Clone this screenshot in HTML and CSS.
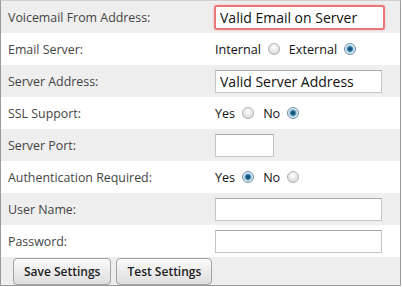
FILE: index.html
```html
<!DOCTYPE html>
<html lang="en">
<head>
    <meta charset="UTF-8">
    <title>Voicemail Settings</title>
    <link rel="stylesheet" href="styles.css">
</head>
<body>
    <form class="settings">
        <div class="row shaded">
            <label class="label">Voicemail From Address:</label>
            <div class="field">
                <input type="text" class="text-input wide invalid" value="Valid Email on Server">
            </div>
        </div>
        <div class="row">
            <label class="label">Email Server:</label>
            <div class="field choice">
                <span>Internal</span> <input type="radio" name="server" class="radio">
                <span>External</span> <input type="radio" name="server" class="radio" checked>
            </div>
        </div>
        <div class="row shaded">
            <label class="label">Server Address:</label>
            <div class="field">
                <input type="text" class="text-input long" value="Valid Server Address">
            </div>
        </div>
        <div class="row">
            <label class="label">SSL Support:</label>
            <div class="field choice">
                <span>Yes</span> <input type="radio" name="ssl" class="radio">
                <span>No</span> <input type="radio" name="ssl" class="radio" checked>
            </div>
        </div>
        <div class="row shaded">
            <label class="label">Server Port:</label>
            <div class="field">
                <input type="text" class="text-input short">
            </div>
        </div>
        <div class="row">
            <label class="label">Authentication Required:</label>
            <div class="field choice">
                <span>Yes</span> <input type="radio" name="auth" class="radio" checked>
                <span>No</span> <input type="radio" name="auth" class="radio">
            </div>
        </div>
        <div class="row shaded">
            <label class="label">User Name:</label>
            <div class="field">
                <input type="text" class="text-input long">
            </div>
        </div>
        <div class="row">
            <label class="label">Password:</label>
            <div class="field">
                <input type="password" class="text-input long">
            </div>
        </div>
        <div class="actions">
            <button type="button" class="button">Save Settings</button>
            <button type="button" class="button">Test Settings</button>
        </div>
    </form>
</body>
</html>
```

FILE: styles.css
```css
:root {
    --label-color: #444444;
    --text-color: #111111;
    --shade: #eeeeee;
    --border-color: #9a9a9a;
    --input-border: #c4c4c4;
}

body {
    margin: 0;
    font-family: 'Open Sans', sans-serif;
    font-size: 12.4px;
    color: var(--text-color);
    background: #ffffff;
}

.settings {
    width: 399px;
    border: 1px solid var(--border-color);
    border-top-color: #d0d0d0;
}

.row {
    display: grid;
    grid-template-columns: 212px 1fr;
    align-items: center;
    height: 32px;
}

.row.shaded {
    background: var(--shade);
}

.label {
    padding-left: 7px;
    color: var(--label-color);
}

.field {
    display: flex;
    align-items: center;
}

.choice {
    padding-left: 2px;
    gap: 7px;
}

.choice span {
    color: var(--text-color);
    font-size: 12.6px;
}

.choice .radio + span {
    margin-left: 2px;
}

.text-input {
    box-sizing: border-box;
    height: 23px;
    border: 1px solid var(--input-border);
    border-top-color: #a8a8a8;
    background: #ffffff;
    font-family: 'Open Sans', sans-serif;
    font-size: 14px;
    color: #111111;
    padding: 0 4px;
    margin: 0 0 0 2px;
}

.text-input.long {
    width: 167px;
}

.text-input.short {
    width: 59px;
}

.text-input.wide {
    width: 171px;
    height: 25px;
    margin-left: 1px;
}

.text-input.invalid {
    border: 2px solid #e8777a;
    border-radius: 3px;
    box-shadow: 0 0 2px #f3b0b2;
    padding: 0 4px;
}

.radio {
    appearance: none;
    -webkit-appearance: none;
    width: 12px;
    height: 12px;
    margin: 0;
    border-radius: 50%;
    border: 1px solid #b0b0b0;
    background: radial-gradient(circle at 50% 35%, #ffffff 0%, #e4e4e4 60%, #c8c8c8 100%);
    box-sizing: border-box;
}

.radio:checked {
    border-color: #6f8ea4;
    background: radial-gradient(circle at 50% 50%, #103a58 0, #1d6a96 28%, #7fb5d6 45%, #e8f0f6 60%, #c9d6e0 100%);
}

.actions {
    display: flex;
    gap: 5px;
    align-items: center;
    height: 28px;
    padding-left: 12px;
    background: var(--shade);
}

.button {
    height: 27px;
    padding: 0 10px;
    border: 1px solid #a3a3a3;
    border-radius: 4px;
    background: linear-gradient(#fafafa, #dedede);
    font-family: 'Open Sans', sans-serif;
    font-size: 12px;
    font-weight: 600;
    color: #222222;
}
```
